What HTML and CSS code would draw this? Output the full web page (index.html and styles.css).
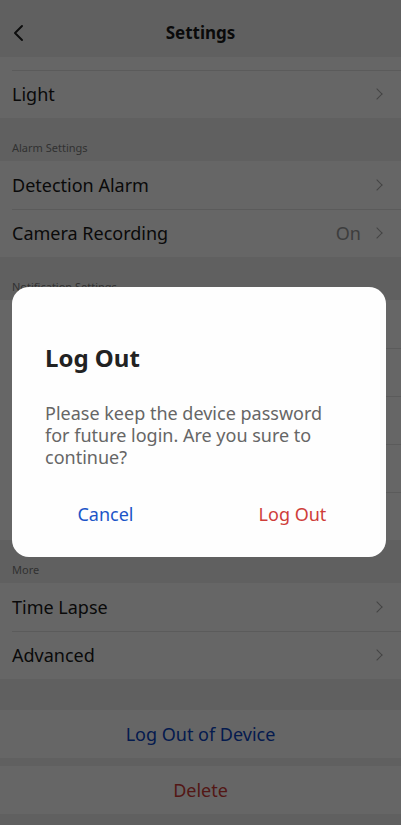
FILE: index.html
```html
<!DOCTYPE html>
<html lang="en">
<head>
<meta charset="utf-8">
<title>Settings</title>
<link rel="stylesheet" href="styles.css">
</head>
<body>
<div class="page">
  <header class="topbar">
    <span class="back">
      <svg width="14" height="18" viewBox="0 0 14 18"><path d="M10 2 L3 9 L10 16" fill="none" stroke="#222" stroke-width="2" stroke-linecap="round" stroke-linejoin="round"/></svg>
    </span>
    <h1 class="title">Settings</h1>
  </header>

  <section class="group">
    <div class="row stub"></div>
    <div class="row"><span class="label">Light</span><span class="chev"></span></div>
  </section>

  <div class="section-label">Alarm Settings</div>
  <section class="group">
    <div class="row"><span class="label">Detection Alarm</span><span class="chev"></span></div>
    <div class="row"><span class="label">Camera Recording</span><span class="value">On</span><span class="chev"></span></div>
  </section>

  <div class="section-label">Notification Settings</div>
  <section class="group">
    <div class="row"><span class="label"></span><span class="chev"></span></div>
    <div class="row"><span class="label"></span><span class="chev"></span></div>
    <div class="row"><span class="label"></span><span class="chev"></span></div>
    <div class="row"><span class="label"></span><span class="chev"></span></div>
    <div class="row"><span class="label"></span><span class="chev"></span></div>
  </section>

  <div class="section-label">More</div>
  <section class="group">
    <div class="row"><span class="label">Time Lapse</span><span class="chev"></span></div>
    <div class="row"><span class="label">Advanced</span><span class="chev"></span></div>
  </section>

  <section class="group action-group">
    <div class="row action blue">Log Out of Device</div>
  </section>
  <section class="group action-group delete-group">
    <div class="row action red">Delete</div>
  </section>
</div>

<div class="overlay"></div>

<div class="dialog" role="dialog">
  <h2 class="dialog-title">Log Out</h2>
  <p class="dialog-text">Please keep the device password for future login. Are you sure to continue?</p>
  <div class="dialog-buttons">
    <button class="btn blue-text">Cancel</button>
    <button class="btn red-text">Log Out</button>
  </div>
</div>
</body>
</html>
```

FILE: styles.css
```css
* { box-sizing: border-box; }
html, body {
  margin: 0;
  padding: 0;
}
body {
  width: 401px;
  height: 825px;
  overflow: hidden;
  background: #f0f1f1;
  font-family: "Noto Sans", Roboto, sans-serif;
  color: #191919;
  position: relative;
}
.page {
  display: flex;
  flex-direction: column;
}
.topbar {
  height: 57px;
  display: flex;
  align-items: center;
  justify-content: center;
  position: relative;
}
.back {
  position: absolute;
  left: 12px;
  top: 24px;
  width: 14px;
  height: 18px;
  display: block;
}
.back svg { display: block; }
.title {
  margin: 0;
  font-size: 17px;
  line-height: 22px;
  font-weight: 700;
  color: #1a1a1a;
  padding-top: 9px;
}
.group {
  background: #fff;
  display: flex;
  flex-direction: column;
}
.row {
  height: 48px;
  display: flex;
  align-items: center;
  padding: 0 18px 0 12px;
  position: relative;
  font-size: 18px;
  line-height: 24px;
}
.row + .row::before {
  content: "";
  position: absolute;
  left: 12px;
  right: 0;
  top: 0;
  height: 1px;
  background: #e3e3e3;
}
.row.stub { height: 13px; }
.label { flex: 1; }
.value {
  color: #9a9a9a;
  margin-right: 12px;
}
.chev {
  width: 8px;
  height: 8px;
  border-right: 1.6px solid #a8a8a8;
  border-top: 1.6px solid #a8a8a8;
  transform: rotate(45deg);
  margin-right: 2px;
}
.section-label {
  height: 43px;
  padding: 23px 12px 0;
  font-size: 11px;
  line-height: 14px;
  color: #7c7c7c;
}
.action-group { margin-top: 31px; }
.delete-group { margin-top: 8px; }
.action {
  justify-content: center;
  padding: 0;
}
.blue { color: #0a45c4; }
.red { color: #cf3b36; }

.overlay {
  position: absolute;
  inset: 0;
  background: rgba(0, 0, 0, 0.6);
}
.dialog {
  position: absolute;
  left: 12px;
  top: 287px;
  width: 374px;
  height: 270px;
  background: #fefefe;
  border-radius: 17px;
  padding: 56px 0 0;
  display: flex;
  flex-direction: column;
}
.dialog-title {
  margin: 0;
  padding: 0 33px;
  font-size: 24px;
  line-height: 30px;
  font-weight: 700;
  color: #222;
}
.dialog-text {
  margin: 29px 0 0;
  padding: 0 51px 0 33px;
  font-size: 18px;
  line-height: 22px;
  color: #666;
}
.dialog-buttons {
  margin-top: 26px;
  display: flex;
}
.btn {
  flex: 1;
  height: 40px;
  border: 0;
  background: transparent;
  font-family: inherit;
  font-size: 18px;
  padding: 0;
}
.blue-text { color: #1b55c8; }
.red-text { color: #cf3e3a; }
```
